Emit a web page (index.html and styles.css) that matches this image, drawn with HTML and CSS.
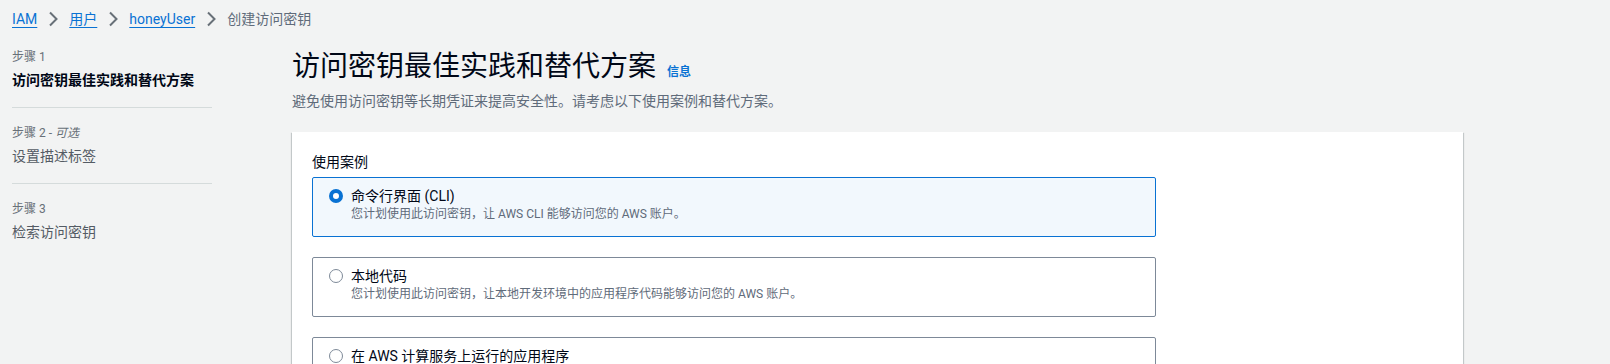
FILE: index.html
```html
<!DOCTYPE html>
<html lang="zh-CN">
<head>
  <meta charset="UTF-8">
  <title>创建访问密钥</title>
  <link rel="stylesheet" href="styles.css">
</head>
<body>

  <nav class="breadcrumbs">
    <a href="#">IAM</a>
    <span class="sep"><svg width="16" height="16" viewBox="0 0 16 16"><path d="M5 1.5l6.5 6.5-6.5 6.5" fill="none" stroke="#687078" stroke-width="2"/></svg></span>
    <a href="#">用户</a>
    <span class="sep"><svg width="16" height="16" viewBox="0 0 16 16"><path d="M5 1.5l6.5 6.5-6.5 6.5" fill="none" stroke="#687078" stroke-width="2"/></svg></span>
    <a href="#">honeyUser</a>
    <span class="sep"><svg width="16" height="16" viewBox="0 0 16 16"><path d="M5 1.5l6.5 6.5-6.5 6.5" fill="none" stroke="#687078" stroke-width="2"/></svg></span>
    <span class="current">创建访问密钥</span>
  </nav>

  <div class="layout">
    <ul class="steps">
      <li class="step">
        <div class="step-label">步骤 1</div>
        <div class="step-title active">访问密钥最佳实践和替代方案</div>
      </li>
      <li class="step">
        <div class="step-label">步骤 2 - <i>可选</i></div>
        <div class="step-title">设置描述标签</div>
      </li>
      <li class="step">
        <div class="step-label">步骤 3</div>
        <div class="step-title">检索访问密钥</div>
      </li>
    </ul>

    <main class="content">
      <h1>访问密钥最佳实践和替代方案 <a class="info" href="#">信息</a></h1>
      <p class="subtitle">避免使用访问密钥等长期凭证来提高安全性。请考虑以下使用案例和替代方案。</p>

      <div class="card">
        <div class="field-label">使用案例</div>

        <label class="option selected">
          <span class="radio"></span>
          <span class="option-text">
            <span class="option-title">命令行界面 (CLI)</span>
            <span class="option-desc">您计划使用此访问密钥，让 AWS CLI 能够访问您的 AWS 账户。</span>
          </span>
        </label>

        <label class="option">
          <span class="radio"></span>
          <span class="option-text">
            <span class="option-title">本地代码</span>
            <span class="option-desc">您计划使用此访问密钥，让本地开发环境中的应用程序代码能够访问您的 AWS 账户。</span>
          </span>
        </label>

        <label class="option">
          <span class="radio"></span>
          <span class="option-text">
            <span class="option-title">在 AWS 计算服务上运行的应用程序</span>
            <span class="option-desc">您计划使用此访问密钥，让在 AWS 计算服务（如 Amazon EC2、Amazon ECS 或 AWS Lambda）上运行的应用程序代码能够访问您的 AWS 账户。</span>
          </span>
        </label>
      </div>
    </main>
  </div>

</body>
</html>
```
FILE: styles.css
```css
html {
  overflow: hidden;
}
body {
  margin: 0;
  background-color: #f2f3f3;
  font-family: Roboto, "Noto Sans CJK SC", sans-serif;
  font-size: 14px;
  line-height: 20px;
  color: #000716;
}
a {
  color: #0972d3;
}
.breadcrumbs {
  display: flex;
  align-items: center;
  padding: 9px 12px 0;
  height: 20px;
}
.breadcrumbs a {
  text-decoration: underline;
  text-underline-offset: 3px;
}
.breadcrumbs .sep {
  display: flex;
  margin: 0 8px;
}
.breadcrumbs .current {
  color: #5f6b7a;
}
.layout {
  display: flex;
  padding-top: 20px;
}
.steps {
  list-style: none;
  margin: 0;
  padding: 0 0 0 12px;
  width: 200px;
  flex: none;
}
.step {
  padding-bottom: 17px;
  margin-bottom: 17px;
  border-bottom: 1px solid #d5dbdb;
}
.step:last-child {
  border-bottom: none;
}
.step-label {
  font-size: 12px;
  line-height: 16px;
  color: #687078;
  margin-bottom: 5px;
}
.step-title {
  color: #545b64;
}
.step-title.active {
  font-weight: bold;
  color: #000716;
}
.content {
  margin-left: 80px;
  flex: 1;
  margin-right: 147px;
}
h1 {
  margin: 0;
  font-size: 28px;
  line-height: 36px;
  font-weight: normal;
}
.info {
  font-size: 12px;
  font-weight: bold;
  text-decoration: none;
  margin-left: 4px;
}
.subtitle {
  margin: 1px 0 0;
  color: #5f6b7a;
}
.card {
  margin-top: 21px;
  background: white;
  padding: 20px;
  box-shadow: 0 1px 1px 0 rgba(0,28,36,0.3), 1px 1px 1px 0 rgba(0,28,36,0.15), -1px 1px 1px 0 rgba(0,28,36,0.15);
}
.field-label {
  margin-bottom: 5px;
}
.option {
  display: flex;
  align-items: flex-start;
  width: 844px;
  box-sizing: border-box;
  padding: 8px 16px 14px;
  border: 1px solid #7d8998;
  border-radius: 2px;
  margin-bottom: 20px;
}
.option.selected {
  border-color: #0972d3;
  background: #f2f8fd;
}
.radio {
  flex: none;
  width: 14px;
  height: 14px;
  box-sizing: border-box;
  border: 1.5px solid #7d8998;
  border-radius: 50%;
  margin: 3px 8px 0 0;
  background: white;
}
.selected .radio {
  border: 4px solid #0972d3;
}
.option-text {
  display: flex;
  flex-direction: column;
}
.option-desc {
  font-size: 12px;
  line-height: 16px;
  color: #5f6b7a;
}
```
